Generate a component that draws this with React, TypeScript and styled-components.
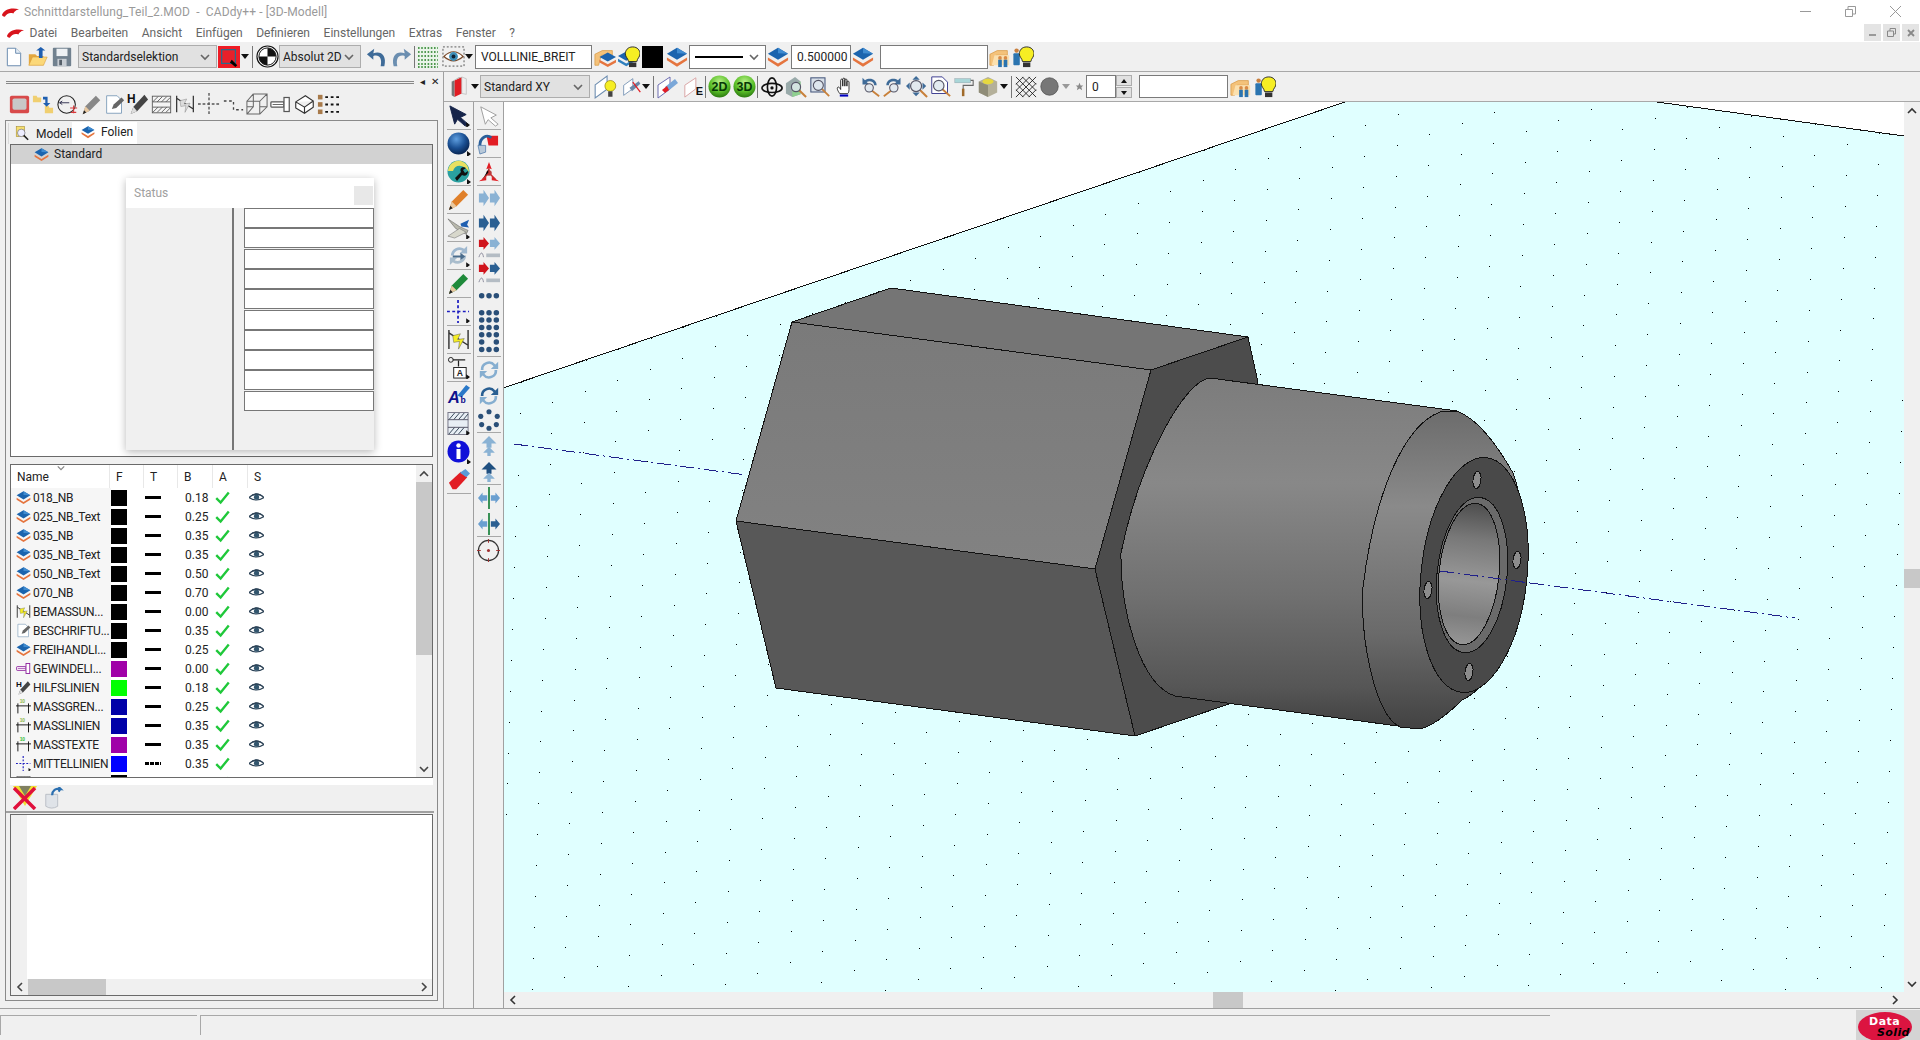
import React from "react";
import styled, { createGlobalStyle } from "styled-components";

const GlobalStyle = createGlobalStyle`
  html, body { margin: 0; padding: 0; background: #f0f0f0; }
  body { font-family: Roboto, "Open Sans", sans-serif; font-size: 12px; color: #222; }
  * { box-sizing: border-box; }
`;

/* ---------- icon primitives ---------- */

const Ico = styled.svg.attrs({ viewBox: "0 0 24 24" })<{ $w?: number; $ml?: number }>`
  width: ${(p) => p.$w ?? 22}px;
  height: ${(p) => p.$w ?? 22}px;
  margin-left: ${(p) => p.$ml ?? 0}px;
  flex-shrink: 0;
  display: block;
`;

type IconProps = { $w?: number; $ml?: number };

const Layers = (p: IconProps) => (
  <Ico {...p}>
    <polygon points="12,2 23,8.5 12,15 1,8.5" fill="#1b64ae" />
    <polygon points="12,2 23,8.5 12,8" fill="#3f8bd0" />
    <polygon points="1,12.5 12,19 23,12.5 23,15.5 12,22.5 1,15.5" fill="#e5753f" />
  </Ico>
);

const Swoosh = ({ $left }: { $left: number }) => (
  <LogoSvg $left={$left} viewBox="0 0 18 10">
    <path d="M0 8 C2 3 8 0 18 2 C14 3 13 5 12 6.500 C8 5 5 7 3 10 C1 10 0 9 0 8 Z" fill="#d8141c" />
  </LogoSvg>
);

const NewDoc = (p: IconProps) => (
  <Ico {...p}>
    <path d="M4 1.5 H14 L20 7.5 V22.5 H4 Z" fill="#fff" stroke="#6d8db0" strokeWidth="1.2" />
    <path d="M14 1.5 V7.5 H20" fill="#e6eef6" stroke="#6d8db0" strokeWidth="1.2" />
  </Ico>
);

const OpenFolder = (p: IconProps) => (
  <Ico {...p}>
    <path d="M2 9 H9 L11 11 H18 V21 H2 Z" fill="#e2a73f" />
    <path d="M2 21 L6 12 H22 L18 21 Z" fill="#fbd879" stroke="#d89b35" strokeWidth=".6" />
    <path d="M13 13 V5 H10 L15 1 L20 5 H17 V13 Z" fill="#1f5fb0" />
  </Ico>
);

const Floppy = (p: IconProps) => (
  <Ico {...p}>
    <rect x="2" y="2" width="20" height="20" rx="1" fill="#71818f" />
    <rect x="6" y="3" width="12" height="8" fill="#eef1f4" />
    <rect x="7" y="14" width="10" height="8" fill="#c8ced4" />
    <rect x="9" y="15" width="3" height="6" fill="#555f69" />
  </Ico>
);

const RedSelect = (p: IconProps) => (
  <Ico {...p}>
    <rect width="24" height="24" fill="#ee1c25" />
    <rect x="4" y="4" width="15" height="15" fill="#e8202a" stroke="#2b6a8a" strokeWidth="1.400" />
    <path d="M15 15 L21 21 L19 23 L13 18 Z" fill="#000" />
  </Ico>
);

const TargetBW = (p: IconProps) => (
  <Ico {...p}>
    <circle cx="12" cy="12" r="11" fill="#fff" stroke="#111" strokeWidth="1.2" />
    <path d="M12 3 A9 9 0 0 1 21 12 H12 Z M12 21 A9 9 0 0 1 3 12 H12 Z" fill="#111" />
    <circle cx="12" cy="12" r="9" fill="none" stroke="#111" />
  </Ico>
);

const CurvedArrow = ({ flip, ...p }: IconProps & { flip?: boolean }) => (
  <Ico {...p}>
    <g transform={flip ? "matrix(-1 0 0 1 24 0)" : undefined}>
      <path d="M20 22 C23 10 16 5 8 8 L9 3 L1 9 L8 15 L8 11 C14 9 18 13 16 22 Z" fill={flip ? "#6b8eb0" : "#3e6b98"} />
    </g>
  </Ico>
);

const DotGrid = (p: IconProps) => (
  <Ico {...p}>
    <rect x="1" y="1" width="22" height="22" fill="#eaf4ea" />
    <path d="M2 3 H22 M2 7 H22 M2 11 H22 M2 15 H22 M2 19 H22 M2 22 H22" stroke="#1e7a1e" strokeWidth="1.6" strokeDasharray="1.6 1.6" />
  </Ico>
);

const EyeBox = (p: IconProps) => (
  <Ico {...p}>
    <rect x="1" y="2" width="22" height="20" fill="none" stroke="#555" strokeDasharray="2 2" />
    <path d="M2 12 Q12 2 22 12 Q12 21 2 12 Z" fill="#fff" stroke="#7a4a2a" strokeWidth="1.2" />
    <circle cx="12" cy="12" r="4.6" fill="#3f8fb8" />
    <circle cx="12" cy="12" r="2" fill="#123" />
  </Ico>
);

const People = () => (
  <>
    <circle cx="12" cy="13" r="2" fill="#d98a45" />
    <rect x="10" y="15" width="4" height="8" fill="#2a74b0" />
    <circle cx="18" cy="13" r="2" fill="#d98a45" />
    <rect x="16" y="15" width="4" height="8" fill="#2a74b0" />
  </>
);

const FolderPeople = (p: IconProps) => (
  <Ico {...p}>
    <path d="M1 9 L9 5 H20 V10 H8 L5 21 H1 Z" fill="#f4c27a" stroke="#d99a45" strokeWidth=".8" />
    <path d="M3 21 L6 10 H22 V21 Z" fill="#fbe0ae" />
    <People />
  </Ico>
);

const LayerFolder = (p: IconProps) => (
  <Ico {...p}>
    <path d="M1 9 L9 5 H20 V10 H8 L5 21 H1 Z" fill="#f4c27a" stroke="#d99a45" strokeWidth=".8" />
    <polygon points="15,7 24,12 15,17 6,12" fill="#1b64ae" />
    <polygon points="6,15 15,20 24,15 24,18 15,23 6,18" fill="#e5753f" />
  </Ico>
);

const Bulb = ({ layer, ...p }: IconProps & { layer?: boolean }) => (
  <Ico {...p}>
    {layer ? (
      <>
        <polygon points="9,6 18,11 9,16 0,11" fill="#1b64ae" />
        <polygon points="0,14 9,19 18,14 18,17 9,22 0,17" fill="#2f7fbd" />
      </>
    ) : (
      <>
        <circle cx="5" cy="5" r="2.4" fill="#c9803f" />
        <rect x="1.5" y="8" width="7" height="13" rx="1" fill="#2a74b0" />
      </>
    )}
    <path d="M16 1 C10.5 1 8 5 8 8.500 C8 12 11 13.500 11.500 17 H20.500 C21 13.500 24 12 24 8.500 C24 5 21.500 1 16 1 Z" fill="#f6ee24" stroke="#222" strokeWidth="1" />
    <rect x="12" y="18" width="8" height="5" fill="#333" />
  </Ico>
);

const Box3 = (p: IconProps) => (
  <Ico {...p}>
    <polygon points="7,5 15,1 15,19 7,23" fill="#e21d24" />
    <polygon points="4,6 7,5 7,23 4,21" fill="#777" />
    <polygon points="4,6 12,1 15,1 7,5" fill="#b8b8b8" />
    <polygon points="15,1 20,3 20,20 15,19" fill="#eee" stroke="#aaa" strokeWidth=".6" />
  </Ico>
);

const PlaneBulb = (p: IconProps) => (
  <Ico {...p}>
    <polygon points="2,10 13,2 13,14 2,22" fill="#fff" stroke="#6d8db0" />
    <circle cx="16" cy="11" r="5" fill="#f6ee24" stroke="#9a8a10" strokeWidth=".7" />
    <rect x="14" y="16" width="4" height="5" fill="#444" />
  </Ico>
);

const PlaneTool = ({ red, ...p }: IconProps & { red?: boolean }) => (
  <Ico {...p}>
    <polygon points="2,10 14,2 14,14 2,23" fill="#fff" stroke={red ? "#d8a0a0" : "#6d6db0"} />
    {red ? (
      <text x="14" y="21" fontSize="12" fontWeight="700" fontFamily="Liberation Sans" fill="#111">E</text>
    ) : (
      <>
        <path d="M9 12 L19 4 L22 8 L12 16 Z" fill="#7aa7d8" />
        <path d="M6 15 L11 11 L13 15 L9 18 Z" fill="#e21d24" />
      </>
    )}
  </Ico>
);

const PlaneTools = (p: IconProps) => (
  <Ico {...p}>
    <polygon points="2,10 13,2 13,14 2,22" fill="#fff" stroke="#6d8db0" />
    <path d="M9 13 L20 5 L22 8 L12 17 Z" fill="#6b88a8" />
    <path d="M13 6 L22 18" stroke="#e21d24" strokeWidth="1.500" />
  </Ico>
);

const Ball2D = ({ label, ...p }: IconProps & { label: string }) => (
  <Ico {...p}>
    <defs>
      <radialGradient id="ballG" cx="50%" cy="30%" r="70%">
        <stop offset="0" stopColor="#b8f08a" />
        <stop offset=".6" stopColor="#5cc02a" />
        <stop offset="1" stopColor="#2b7a10" />
      </radialGradient>
    </defs>
    <circle cx="12" cy="12" r="11.500" fill="url(#ballG)" />
    <text x="12" y="17" textAnchor="middle" fontSize="13" fontWeight="700" fontFamily="Liberation Sans" fill="#063806">{label}</text>
  </Ico>
);

const Orbit = (p: IconProps) => (
  <Ico {...p}>
    <ellipse cx="12" cy="12" rx="5" ry="10" fill="none" stroke="#111" strokeWidth="1.800" />
    <ellipse cx="12" cy="13" rx="11" ry="5" fill="none" stroke="#111" strokeWidth="1.800" />
    <circle cx="12" cy="13" r="1.800" fill="#111" />
  </Ico>
);

const Magnifier = ({ x = 10, y = 10, r = 7 }: { x?: number; y?: number; r?: number }) => (
  <>
    <line x1={x + r * 0.7} y1={y + r * 0.7} x2="23" y2="23" stroke="#c8803a" strokeWidth="2.200" />
    <circle cx={x} cy={y} r={r} fill="#dfe8ee" fillOpacity=".85" stroke="#556" strokeWidth="1.300" />
  </>
);

const HouseZoom = (p: IconProps) => (
  <Ico {...p}>
    <polygon points="1,8 11,1 17,6 17,20 8,23 1,19" fill="#9aa" />
    <polygon points="8,10 17,6 17,20 8,23" fill="#8fd08f" />
    <Magnifier x={12} y={12} r={5} />
  </Ico>
);

const GlassBox = (p: IconProps) => (
  <Ico {...p}>
    <rect x="1" y="1" width="17" height="17" fill="#d7dfe8" stroke="#4b5b80" strokeWidth="1.300" />
    <Magnifier x={10} y={10} r={6} />
  </Ico>
);

const Hand = (p: IconProps) => (
  <Ico {...p}>
    <path d="M7 20 C4 16 3 13 5 12 C6 12 7 13 8 15 V4 C8 2 10.500 2 10.500 4 V11 V2.500 C10.500 1 13 1 13 2.500 V11 V3.500 C13 2 15.500 2 15.500 3.500 V11 V6 C15.500 4.500 18 4.500 18 6 V15 C18 18 17 20 16 20 Z" fill="#fff" stroke="#111" />
    <rect x="7" y="21" width="10" height="2.500" fill="#0000c0" />
  </Ico>
);

const ZoomArrow = ({ fwd, ...p }: IconProps & { fwd?: boolean }) => (
  <Ico {...p}>
    <path d={fwd ? "M4 10 C4 3 12 0 18 4 L21 1 V9 H13 L16 6 C12 4 7 6 7 10 Z" : "M20 10 C20 3 12 0 6 4 L3 1 V9 H11 L8 6 C12 4 17 6 17 10 Z"} fill="#3e6b98" />
    <g transform={fwd ? "matrix(-1 0 0 1 24 0)" : undefined}>
      <Magnifier x={11} y={13} r={5} />
    </g>
  </Ico>
);

const PanZoom = (p: IconProps) => (
  <Ico {...p}>
    <polygon points="11,0 15,4 7,4" fill="#3e6b98" />
    <polygon points="11,22 15,18 7,18" fill="#3e6b98" />
    <polygon points="0,11 4,7 4,15" fill="#3e6b98" />
    <polygon points="22,11 18,7 18,15" fill="#3e6b98" />
    <Magnifier x={11} y={11} r={6} />
  </Ico>
);

const DocZoom = (p: IconProps) => (
  <Ico {...p}>
    <path d="M2 1 H14 L20 7 V20 H2 Z" fill="#fff" stroke="#3c3c90" strokeWidth="1.100" />
    <Magnifier x={10} y={11} r={6} />
  </Ico>
);

const Roller = (p: IconProps) => (
  <Ico {...p}>
    <rect x="1" y="2" width="19" height="5" fill="#a9d6d8" stroke="#8899a0" strokeWidth=".5" />
    <path d="M20 4 H23 V10 H11 V15" fill="none" stroke="#666" strokeWidth="1.300" />
    <rect x="9.500" y="14" width="3" height="9" fill="#a06a2a" />
  </Ico>
);

const ShadedCube = (p: IconProps) => (
  <Ico {...p}>
    <polygon points="2,6 12,1 22,6 22,18 12,23 2,18" fill="#b4b09a" />
    <polygon points="2,6 12,10 12,23 2,18" fill="#8f8c78" />
    <ellipse cx="12" cy="6" rx="6" ry="3" fill="#e6d840" />
  </Ico>
);

const Hatch = (p: IconProps) => (
  <Ico {...p}>
    <path d="M1 1 L23 23 M8 1 L23 16 M15 1 L23 9 M1 8 L16 23 M1 15 L9 23 M23 1 L1 23 M16 1 L1 16 M9 1 L1 9 M23 8 L8 23 M23 15 L15 23" stroke="#111" strokeWidth=".9" />
  </Ico>
);

const GreyBall = (p: IconProps) => (
  <Ico {...p}>
    <circle cx="12" cy="12" r="11" fill="#777" stroke="#555" />
  </Ico>
);

const Star = (p: IconProps) => (
  <Ico {...p}>
    <polygon points="12,2 15,9 22,9 17,14 19,22 12,17 5,22 7,14 2,9 9,9" fill="#888" />
  </Ico>
);

/* left dock icon row */
const ActiveToggle = (p: IconProps) => (
  <Ico {...p}>
    <rect x="1" y="2" width="22" height="20" rx="2" fill="#d84a4a" />
    <rect x="4" y="5" width="16" height="13" rx="2" fill="#c8c8c8" />
  </Ico>
);

const FolderSwap = (p: IconProps) => (
  <Ico {...p}>
    <path d="M1 3 H5 L6 5 H10 V10 H1 Z" fill="#f0cf70" />
    <path d="M14 14 H18 L19 16 H23 V22 H14 Z" fill="#f0cf70" />
    <path d="M12 4 H17 V11 H20 L16 15 L12 11 H14.500 V7 H12 Z" fill="#1f5fb0" />
  </Ico>
);

const CircleDim = (p: IconProps) => (
  <Ico {...p}>
    <circle cx="11" cy="12" r="10" fill="none" stroke="#222" strokeWidth="1.200" />
    <path d="M3 10 H14 M3 10 L6 8 M3 10 L6 12" fill="none" stroke="#224" />
    <path d="M15 16 H23 M19 13 V22 M16 21 H22" stroke="#d8383a" strokeWidth="1.200" />
  </Ico>
);

const Pencil = ({ color = "#888", tip = "#e8c8a0", ...p }: IconProps & { color?: string; tip?: string }) => (
  <Ico {...p}>
    <path d="M2 23 L5 14 L17 2 L22 7 L10 19 Z" fill={color} />
    <path d="M2 23 L5 14 L10 19 Z" fill={tip} />
    <path d="M2 23 L3.500 18.500 L6 21 Z" fill="#222" />
  </Ico>
);

const NotePencil = (p: IconProps) => (
  <Ico {...p}>
    <path d="M3 2 H15 L20 7 V22 H3 Z" fill="#fff" stroke="#7a9ab8" />
    <path d="M9 17 L11 12 L20 4 L23 7 L14 16 Z" fill="#666" />
  </Ico>
);

const HPencil = (p: IconProps) => (
  <Ico {...p}>
    <text x="0" y="11" fontSize="13" fontWeight="700" fontFamily="Liberation Sans" fill="#111">H</text>
    <path d="M4 23 L7 15 L19 2 L23 7 L11 20 Z" fill="#444" />
    <path d="M4 23 L7 15 L11 20 Z" fill="#ddd" />
  </Ico>
);

const HatchBox = (p: IconProps) => (
  <Ico {...p}>
    <rect x="1.500" y="2.500" width="21" height="19" fill="#f4f4f4" stroke="#555" />
    <path d="M2 9 L8 3 M7 9 L13 3 M12 9 L18 3 M17 9 L22 4 M2 21 L8 15 M7 21 L13 15 M12 21 L18 15 M17 21 L22 16" stroke="#555" />
    <path d="M2 9 H22 M2 15 H22" stroke="#555" />
  </Ico>
);

const DimBolt = ({ fill, ...p }: IconProps & { fill?: string }) => (
  <Ico {...p}>
    <path d="M2 2 V22 M22 2 V22 M2 5 L22 18" stroke="#333" strokeWidth="1.500" fill="none" />
    <path d="M6 8 L14 6 L11 12 L18 11 L12 22 L13 14 L7 15 Z" fill={fill ?? "#dcdcdc"} stroke={fill ? "#555" : "#777"} strokeWidth=".5" />
  </Ico>
);

const CenterMark = (p: IconProps) => (
  <Ico {...p}>
    <path d="M0 12 H24 M12 0 V24" stroke="#555" strokeWidth="1.500" strokeDasharray="3 2" />
  </Ico>
);

const StepDash = (p: IconProps) => (
  <Ico {...p}>
    <path d="M1 8 H12 V18 H23" fill="none" stroke="#444" strokeWidth="1.500" strokeDasharray="3 3" />
  </Ico>
);

const WireCube = (p: IconProps) => (
  <Ico {...p}>
    <path d="M1 9 H15 V23 H1 Z M8 1 H23 V15 H15 M1 9 L8 1 M15 9 L23 1 M8 1 V15 H1 M15 23 L23 15 M8 15 L1 23" fill="none" stroke="#666" strokeWidth="1.100" />
  </Ico>
);

const Thread = ({ color = "#555", ...p }: IconProps & { color?: string }) => (
  <Ico {...p}>
    <rect x="1" y="9" width="15" height="6" rx="1" fill="#fff" stroke={color} strokeWidth="1.400" />
    <rect x="16" y="4" width="6" height="16" fill="#fff" stroke={color} strokeWidth="1.400" />
    <path d="M3 12 H15" stroke={color} />
  </Ico>
);

const WireBox = (p: IconProps) => (
  <Ico {...p}>
    <path d="M2 9 L13 2 L22 8 V15 L12 22 L2 16 Z M2 9 L12 15 L22 8 M12 15 V22" fill="#fff" stroke="#333" strokeWidth="1.300" />
  </Ico>
);

const ListIcon = (p: IconProps) => (
  <Ico {...p}>
    <rect x="1" y="2" width="5" height="5" fill="#a87a4a" />
    <rect x="1" y="10" width="5" height="5" fill="#a87a4a" />
    <rect x="1" y="18" width="5" height="5" fill="#a87a4a" />
    <path d="M9 4.500 H24 M9 12.500 H24 M9 20.500 H24" stroke="#111" strokeWidth="2" strokeDasharray="3 3" />
  </Ico>
);

/* vertical rail icons */
const Flyout = () => <polygon points="20,19 24,22 20,25" fill="#111" />;

const ArrowTool = ({ ghost, ...p }: IconProps & { ghost?: boolean }) => (
  <Ico {...p}>
    <path d="M3 2 L20 11 L14 14 L22 21 L19 23 L11 16 L8 21 Z" fill={ghost ? "#fff" : "#16244a"} stroke={ghost ? "#999" : "#16244a"} />
    {!ghost && <Flyout />}
  </Ico>
);

const Sphere = (p: IconProps) => (
  <Ico {...p}>
    <defs>
      <radialGradient id="sphereG" cx="40%" cy="30%" r="75%">
        <stop offset="0" stopColor="#5f9fe0" />
        <stop offset=".55" stopColor="#1a4f92" />
        <stop offset="1" stopColor="#07204a" />
      </radialGradient>
    </defs>
    <circle cx="11.500" cy="11.500" r="11" fill="url(#sphereG)" />
    <Flyout />
  </Ico>
);

const GlobeWrench = (p: IconProps) => (
  <Ico {...p}>
    <circle cx="11.500" cy="11.500" r="11" fill="#2aa0a0" />
    <path d="M1 11 A11 11 0 0 1 14 1 C20 3 22 8 22 12 C17 4 8 4 6 11 Z" fill="#e8e060" />
    <path d="M8 18 L14 12 C12 8 16 6 19 8 L16 10 L18 13 L21 11 C21 15 18 17 15 15 L10 21 Z" fill="#111" />
    <Flyout />
  </Ico>
);

const Pliers = (p: IconProps) => (
  <Ico {...p}>
    <path d="M1 3 L13 11 L22 15 L20 19 L9 13 Z" fill="#b8b8ac" stroke="#666" strokeWidth=".6" />
    <path d="M1 21 L13 13 L20 17 L8 23 Z" fill="#d8d8cc" stroke="#777" strokeWidth=".6" />
    <path d="M14 8 L23 4 L21 9 L23 12 L15 11 Z" fill="#1f5fb0" />
    <Flyout />
  </Ico>
);

const Rotor = (p: IconProps) => (
  <Ico {...p}>
    <path d="M4 12 A9 9 0 0 1 18 5 L21 2 V10 H13 L16 7 A6 6 0 0 0 7 12 Z" fill="#9fb8cf" />
    <path d="M20 12 A9 9 0 0 1 6 19 L3 22 V14 H11 L8 17 A6 6 0 0 0 17 12 Z" fill="#a8bccc" />
    <path d="M6 12 H14 V9 L19 13 L14 17 V14 H6 Z" fill="#4a6c8c" />
    <Flyout />
  </Ico>
);

const CenterTool = (p: IconProps) => (
  <Ico {...p}>
    <path d="M0 12 H23 M11.500 0 V24" stroke="#1c1cc0" strokeWidth="1.800" strokeDasharray="3 2.500" />
    <Flyout />
  </Ico>
);

const AnnotTool = (p: IconProps) => (
  <Ico {...p}>
    <circle cx="4" cy="4" r="2.500" fill="none" stroke="#222" />
    <path d="M6 4 H19 M12 5 V11" stroke="#222" strokeWidth="1.300" />
    <rect x="7" y="12" width="13" height="11" fill="#fff" stroke="#222" />
    <text x="13.500" y="21" textAnchor="middle" fontSize="9" fontWeight="700" fontFamily="Liberation Sans" fill="#222">A</text>
    <Flyout />
  </Ico>
);

const TextTool = (p: IconProps) => (
  <Ico {...p}>
    <path d="M11 12 L20 1 L24 4 L15 14 Z" fill="#2a78c8" />
    <text x="1" y="20" fontSize="17" fontWeight="700" fontStyle="italic" fontFamily="Liberation Sans" fill="#10108c">A</text>
    <text x="14" y="20" fontSize="9" fontWeight="700" fontFamily="Liberation Sans" fill="#10108c">b</text>
  </Ico>
);

const HatchTool = (p: IconProps) => (
  <Ico {...p}>
    <rect x="1" y="0.500" width="21" height="23" fill="#e8eef4" stroke="#778" />
    <path d="M2 8 L8 1 M7 8 L13 1 M12 8 L18 1 M17 8 L22 2 M2 23 L8 16 M7 23 L13 16 M12 23 L18 16" stroke="#345" />
    <path d="M1 8 H22 M1 16 H22" stroke="#556" />
    <Flyout />
  </Ico>
);

const Info = (p: IconProps) => (
  <Ico {...p}>
    <circle cx="11.500" cy="11.500" r="11" fill="#1010d8" />
    <circle cx="11.500" cy="5.500" r="2.200" fill="#fff" />
    <rect x="9.500" y="9" width="4" height="10" fill="#fff" />
    <Flyout />
  </Ico>
);

const Eraser = (p: IconProps) => (
  <Ico {...p}>
    <path d="M1 15 L14 3 L21 9 L9 22 L5 22 Z" fill="#e21d24" />
    <path d="M13 4 L19 0 L24 5 L20 9 Z" fill="#5a9ad8" />
  </Ico>
);

const MoveRed = (p: IconProps) => (
  <Ico {...p}>
    <path d="M10 4 L22 4 L22 14 L12 14 Z" fill="#e21d24" />
    <path d="M3 14 C3 6 10 2 15 6" fill="none" stroke="#2a5f9a" strokeWidth="3" />
    <path d="M1 14 L9 14 L9 21 L3 23 Z" fill="#b8c8d8" stroke="#2a5f9a" strokeWidth=".6" />
  </Ico>
);

const Triad = (p: IconProps) => (
  <Ico {...p}>
    <path d="M12 1 L15 9 L12 8 L9 9 Z M1 22 L9 17 L9 21 Z M23 22 L15 17 L15 21 Z" fill="#e21d24" />
    <circle cx="12" cy="13" r="3" fill="#b84040" />
    <path d="M12 8 V13 L5 20 M12 13 L19 20" stroke="#c83030" strokeWidth="1.600" />
  </Ico>
);

const DoubleArrow = ({ a, b, ...p }: IconProps & { a: string; b: string }) => (
  <Ico {...p}>
    <polygon points="1,7 6,7 6,3 12,12 6,21 6,17 1,17" fill={a} />
    <polygon points="13,7 18,7 18,3 24,12 18,21 18,17 13,17" fill={b} />
  </Ico>
);

const ArrowWave = ({ b, ...p }: IconProps & { b: string }) => (
  <Ico {...p}>
    <polygon points="1,3 6,3 6,0 12,7 6,14 6,11 1,11" fill="#d0141c" />
    <polygon points="13,3 18,3 18,0 24,7 18,14 18,11 13,11" fill={b} />
    <path d="M1 22 C3 16 5 16 6 22" fill="none" stroke="#889" />
    <path d="M9 18 H24 V22 H9 Z" fill="#b4bcc4" />
  </Ico>
);

const DotsGrid = ({ rows, gapAt }: { rows: number; gapAt?: number }) => (
  <DotsSvg viewBox={`0 0 24 ${rows * 8}`} $h={rows * 7.7}>
    {Array.from({ length: rows * 3 }).map((_, i) =>
      i === gapAt ? null : <circle key={i} cx={4 + (i % 3) * 8} cy={4 + Math.floor(i / 3) * 8} r="3" fill="#2a4f78" />
    )}
  </DotsSvg>
);

const RotateDouble = ({ dark, ...p }: IconProps & { dark?: boolean }) => (
  <Ico {...p}>
    <path d="M3 12 A9 9 0 0 1 19 6 L22 3 V11 H14 L17 8 A6 6 0 0 0 6 12 Z" fill={dark ? "#2a5f92" : "#86aed0"} />
    <path d="M21 12 A9 9 0 0 1 5 18 L2 21 V13 H10 L7 16 A6 6 0 0 0 18 12 Z" fill="#86aed0" />
  </Ico>
);

const DotRing = (p: IconProps) => (
  <Ico {...p}>
    {[[12, 3], [21, 8], [20, 17], [12, 21], [4, 17], [3, 8]].map(([x, y]) => (
      <circle key={x + "-" + y} cx={x} cy={y} r="2.800" fill="#2a4f78" />
    ))}
  </Ico>
);

const UpArrows = ({ dark, ...p }: IconProps & { dark?: boolean }) => (
  <Ico {...p}>
    <polygon points="12,0 21,9 15,9 15,14 9,14 9,9 3,9" fill={dark ? "#1f4f80" : "#8ab2d4"} />
    <polygon points="12,13 19,20 14,20 14,24 10,24 10,20 5,20" fill="#8ab2d4" />
  </Ico>
);

const Mirror = ({ b, ...p }: IconProps & { b: string }) => (
  <Ico {...p}>
    <rect x="11" y="0" width="2" height="24" fill="#2a8a4a" />
    <polygon points="0,12 5,6 5,9 10,9 10,15 5,15 5,18" fill="#6a9fd0" />
    <polygon points="24,12 19,6 19,9 14,9 14,15 19,15 19,18" fill={b} />
  </Ico>
);

const SnapCircle = (p: IconProps) => (
  <Ico {...p}>
    <circle cx="12" cy="12" r="10.500" fill="none" stroke="#333" strokeWidth="1.300" />
    <path d="M12 0 V4 M12 20 V24 M0 12 H4 M20 12 H24" stroke="#a03030" />
    <circle cx="12" cy="12" r="1.600" fill="#a03030" />
  </Ico>
);

/* list row icons */
const Check = (p: IconProps) => (
  <Ico {...p}>
    <path d="M2 13 L9 20 L22 4" fill="none" stroke="#1fc83a" strokeWidth="3.800" />
  </Ico>
);

const EyeSmall = (p: IconProps) => (
  <Ico {...p}>
    <path d="M0 12 Q12 1 24 12 Q12 20 0 12 Z" fill="#fff" stroke="#2c4256" strokeWidth="1.800" />
    <path d="M0 11 Q12 -1 24 11 Q12 5 0 11 Z" fill="#2c4256" />
    <circle cx="12" cy="11.500" r="4.200" fill="#33566e" />
  </Ico>
);

const DimSmall = ({ color = "#8fb84a", ...p }: IconProps & { color?: string }) => (
  <Ico {...p}>
    <path d="M3 7 V23 M20 7 V23 M0 11 H24" stroke="#111" strokeWidth="1.500" />
    <text x="6" y="7" fontSize="8" fontWeight="700" fontFamily="Liberation Sans" fill={color}>10</text>
  </Ico>
);

const ExLayer = (p: IconProps) => (
  <Ico {...p}>
    <polygon points="0,0 24,0 12,20" fill="#f0e030" />
    <polygon points="6,0 18,0 12,10" fill="#808060" />
    <path d="M1 2 L22 23 M22 2 L1 23" stroke="#e0103c" strokeWidth="3.500" />
  </Ico>
);

const CanUndo = (p: IconProps) => (
  <Ico {...p}>
    <path d="M3 8 H16 V21 Q9.500 25 3 21 Z" fill="#dfe3e8" stroke="#b8bcc4" />
    <path d="M10 9 C10 4 14 1 19 2 L17 0 M19 2 L17 5" fill="none" stroke="#2a6fb0" strokeWidth="2.400" />
  </Ico>
);

const TabMagnifier = (p: IconProps) => (
  <Ico {...p}>
    <rect x="2" y="1" width="13" height="16" fill="#f6e070" stroke="#a89030" />
    <circle cx="10" cy="11" r="6" fill="#eef" stroke="#667" />
    <line x1="14" y1="15" x2="21" y2="22" stroke="#222" strokeWidth="2.500" />
  </Ico>
);

const Chevron = ({ dir, color = "#444", size = 10 }: { dir: "up" | "down" | "left" | "right"; color?: string; size?: number }) => {
  const d = { up: "M1 7 L5 3 L9 7", down: "M1 3 L5 7 L9 3", left: "M7 1 L3 5 L7 9", right: "M3 1 L7 5 L3 9" }[dir];
  return (
    <ChevronSvg viewBox="0 0 10 10" $size={size}>
      <path d={d} fill="none" stroke={color} strokeWidth="1.600" />
    </ChevronSvg>
  );
};

/* ---------- layout ---------- */

const Page = styled.div`
  width: 1920px;
  height: 1040px;
  display: flex;
  flex-direction: column;
  overflow: hidden;
  background: #f0f0f0;
`;

const TitleBar = styled.div`
  height: 22px;
  background: #fff;
  display: flex;
  align-items: center;
  color: #9a9a9a;
  font-size: 12px;
  padding: 1px 0 0 2px;
  position: relative;
`;

const LogoSvg = styled.svg<{ $left: number }>`
  width: 17px;
  height: 10px;
  margin-left: ${(p) => p.$left}px;
  margin-right: 5px;
  flex-shrink: 0;
`;

const TitleText = styled.span`
  white-space: pre;
  letter-spacing: 0.1px;
`;

const WindowButtons = styled.div`
  margin-left: auto;
  display: flex;
  align-items: center;
  gap: 34px;
  padding-right: 19px;
`;

const MenuRow = styled.div`
  height: 20px;
  background: #fff;
  display: flex;
  align-items: center;
  color: #666;
  padding: 1px 0 0 7px;
  gap: 13.6px;
`;

const MenuItem = styled.span`
  white-space: nowrap;
  &:first-of-type {
    margin-left: -13px;
  }
`;

const MdiButtons = styled.div`
  margin-left: auto;
  display: flex;
  gap: 2px;
  padding-right: 1px;
`;

const MdiButton = styled.div`
  width: 17px;
  height: 17px;
  background: #e4e4e4;
  display: flex;
  align-items: center;
  justify-content: center;
`;

const Toolbar = styled.div<{ $h: number; $pad: number }>`
  height: ${(p) => p.$h}px;
  padding-left: ${(p) => p.$pad}px;
  display: flex;
  align-items: center;
  background: #f0f0f0;
  border-bottom: 1px solid #a8a8a8;
  flex-shrink: 0;
`;

const Sep = styled.div<{ $ml: number; $mr?: number }>`
  width: 1px;
  height: 22px;
  background: #777;
  margin-left: ${(p) => p.$ml}px;
  margin-right: ${(p) => p.$mr ?? 0}px;
  flex-shrink: 0;
`;

const Caret = styled.div<{ $ml: number; $grey?: boolean }>`
  width: 0;
  height: 0;
  border-left: 4px solid transparent;
  border-right: 4px solid transparent;
  border-top: 5px solid ${(p) => (p.$grey ? "#999" : "#111")};
  margin-left: ${(p) => p.$ml}px;
  flex-shrink: 0;
`;

const Select = styled.div<{ $w: number; $ml: number; $white?: boolean; $h?: number }>`
  width: ${(p) => p.$w}px;
  height: ${(p) => p.$h ?? 23}px;
  margin-left: ${(p) => p.$ml}px;
  background: ${(p) => (p.$white ? "#fff" : "#e1e1e1")};
  border: 1px solid ${(p) => (p.$white ? "#7a7a7a" : "#adadad")};
  display: flex;
  align-items: center;
  justify-content: space-between;
  padding: 0 6px 0 3px;
  color: #222;
  flex-shrink: 0;
  white-space: nowrap;
`;

const LinePreview = styled.div`
  width: 48px;
  height: 2px;
  background: #000;
  margin-left: 2px;
`;

const Field = styled.div<{ $w: number; $ml: number; $h?: number; $pad?: number }>`
  width: ${(p) => p.$w}px;
  height: ${(p) => p.$h ?? 24}px;
  margin-left: ${(p) => p.$ml}px;
  background: #fff;
  border: 1px solid #7a7a7a;
  display: flex;
  align-items: center;
  padding-left: ${(p) => p.$pad ?? 5}px;
  color: #222;
  flex-shrink: 0;
`;

const Swatch = styled.div<{ $ml: number }>`
  width: 21px;
  height: 22px;
  margin-left: ${(p) => p.$ml}px;
  background: #000;
  flex-shrink: 0;
`;

const Spin = styled.div`
  width: 16px;
  height: 23px;
  display: flex;
  flex-direction: column;
  justify-content: space-between;
  flex-shrink: 0;
`;

const SpinBtn = styled.div<{ $down?: boolean }>`
  height: 11px;
  background: #e1e1e1;
  border: 1px solid #adadad;
  display: flex;
  align-items: center;
  justify-content: center;
  &::after {
    content: "";
    border-left: 3px solid transparent;
    border-right: 3px solid transparent;
    ${(p) => (p.$down ? "border-top: 4px solid #111;" : "border-bottom: 4px solid #111;")}
  }
`;

const Main = styled.div`
  flex: 1;
  display: flex;
  min-height: 0;
`;

const Dock = styled.div`
  width: 444px;
  border-right: 1px solid #a0a0a0;
  display: flex;
  flex-direction: column;
  background: #f0f0f0;
  flex-shrink: 0;
`;

const DockHeader = styled.div`
  height: 20px;
  display: flex;
  align-items: center;
  padding-left: 6px;
  color: #222;
`;

const Grip = styled.div`
  width: 408px;
  height: 3px;
  border-top: 1px solid #888;
  border-bottom: 1px solid #888;
`;

const DockHeaderGlyph = styled.span<{ $ml: number }>`
  margin-left: ${(p) => p.$ml}px;
  font-size: 10px;
  font-weight: 700;
  line-height: 1;
  font-family: "Liberation Sans", "DejaVu Sans", sans-serif;
`;

const DockIcons = styled.div`
  height: 24px;
  display: flex;
  align-items: center;
  padding-left: 9px;
  margin-bottom: 4px;
`;

const Panel = styled.div`
  margin-left: 5px;
  width: 433px;
  height: 881px;
  border: 1px solid #8a8a8a;
  padding: 0 0 0 4px;
  display: flex;
  flex-direction: column;
`;

const Tabs = styled.div`
  height: 23px;
  display: flex;
  margin-left: -2px;
  align-items: flex-end;
`;

const Tab = styled.div<{ $active?: boolean }>`
  width: ${(p) => (p.$active ? 65 : 64)}px;
  height: ${(p) => (p.$active ? 22 : 21)}px;
  background: ${(p) => (p.$active ? "#fff" : "#f0f0f0")};
  border-left: ${(p) => (p.$active ? "none" : "1px solid #d8d8d8")};
  display: flex;
  align-items: center;
  gap: 6px;
  padding-left: ${(p) => (p.$active ? 9 : 6)}px;
  padding-bottom: ${(p) => (p.$active ? 3 : 0)}px;
  color: #222;
  white-space: nowrap;
`;

const TreeBox = styled.div`
  width: 423px;
  height: 313px;
  border: 1px solid #6a6a6a;
  background: #fff;
  position: relative;
  flex-shrink: 0;
`;

const TreeRow = styled.div`
  height: 19px;
  background: #d2d2d2;
  display: flex;
  align-items: center;
  gap: 5px;
  padding: 0 0 1px 23px;
  color: #222;
`;

const StatusWindow = styled.div`
  position: absolute;
  left: 115px;
  top: 33px;
  width: 248px;
  height: 272px;
  background: #f0f0f0;
  box-shadow: 0 2px 8px rgba(0, 0, 0, 0.28);
  display: flex;
  flex-direction: column;
`;

const StatusHead = styled.div`
  height: 30px;
  background: #fff;
  color: #a0a0a0;
  display: flex;
  align-items: center;
  justify-content: space-between;
  padding: 0 1px 0 8px;
`;

const StatusClose = styled.div`
  width: 19px;
  height: 19px;
  background: #e8e8e8;
  margin-top: 4px;
`;

const StatusBody = styled.div`
  flex: 1;
  display: flex;
`;

const StatusLeft = styled.div`
  width: 108px;
  border-right: 2px solid #777;
`;

const StatusFields = styled.div`
  margin-left: 10px;
  width: 130px;
  display: flex;
  flex-direction: column;
`;

const StatusField = styled.div<{ $gap: number }>`
  height: 20px;
  margin-top: ${(p) => p.$gap}px;
  background: #fff;
  border: 1px solid #777;
  flex-shrink: 0;
`;

const ListBox = styled.div`
  margin-top: 7px;
  width: 423px;
  height: 314px;
  border: 1px solid #6a6a6a;
  background: #fff;
  display: flex;
  flex-shrink: 0;
  overflow: hidden;
`;

const ListMain = styled.div`
  flex: 1;
  min-width: 0;
  overflow: hidden;
`;

const ListHead = styled.div`
  height: 23px;
  display: grid;
  grid-template-columns: 99px 34px 34px 35px 35px 35px;
  position: relative;
`;

const HeadCell = styled.div`
  display: flex;
  align-items: center;
  padding-left: 6px;
  border-right: 1px solid #e8e8e8;
  color: #222;
  &:nth-child(6) {
    border-right: none;
  }
`;

const SortMark = styled.div`
  position: absolute;
  left: 46px;
  top: -1px;
`;

const Row = styled.div`
  height: 19px;
  display: grid;
  grid-template-columns: 100px 33px 34px 35px 35px 35px;
  align-items: center;
  color: #222;
`;

const NameCell = styled.div`
  height: 19px;
  background: #f6f6f6;
  display: flex;
  align-items: center;
  gap: 2px;
  padding-left: 5px;
  white-space: nowrap;
  letter-spacing: -0.25px;
`;

const ColorCell = styled.div<{ $color: string }>`
  width: 16px;
  height: 16px;
  background: ${(p) => p.$color};
`;

const DashCell = styled.div<{ $dotted?: boolean }>`
  width: 16px;
  height: 3px;
  margin-left: 1px;
  background: ${(p) => (p.$dotted ? "repeating-linear-gradient(90deg, #000 0 4px, #fff 4px 5px)" : "#000")};
`;

const WidthCell = styled.div`
  padding-left: 7px;
`;

const IconCell = styled.div<{ $pad: number }>`
  padding-left: ${(p) => p.$pad}px;
`;

const VTrack = styled.div<{ $w?: number }>`
  width: ${(p) => p.$w ?? 16}px;
  background: #f0f0f0;
  display: flex;
  flex-direction: column;
  align-items: center;
  flex-shrink: 0;
  position: relative;
`;

const ScrollEnd = styled.div<{ $bottom?: boolean }>`
  height: 17px;
  width: 100%;
  display: flex;
  align-items: center;
  justify-content: center;
  flex-shrink: 0;
  margin-top: ${(p) => (p.$bottom ? "auto" : 0)};
`;

const ThumbV = styled.div<{ $h: number; $top?: number }>`
  width: 100%;
  height: ${(p) => p.$h}px;
  margin-top: ${(p) => p.$top ?? 0}px;
  background: #c8c8c8;
  flex-shrink: 0;
`;

const WhiteStrip = styled.div`
  height: 7px;
  width: 423px;
  background: #fff;
  flex-shrink: 0;
`;

const ListTools = styled.div`
  height: 28px;
  width: 428px;
  margin-left: -4px;
  padding-left: 7px;
  border-bottom: 2px solid #a0a0a0;
  display: flex;
  align-items: center;
  gap: 6px;
  flex-shrink: 0;
`;

const NoteBox = styled.div`
  margin-top: 1px;
  width: 423px;
  height: 182px;
  border: 1px solid #6a6a6a;
  background: #fff;
  display: flex;
  flex-direction: column;
  flex-shrink: 0;
`;

const NoteArea = styled.div`
  flex: 1;
  display: flex;
`;

const NoteGutter = styled.div`
  width: 16px;
  background: #f0f0f0;
`;

const HScroll = styled.div<{ $h: number }>`
  height: ${(p) => p.$h}px;
  background: #f0f0f0;
  display: flex;
  align-items: center;
  justify-content: space-between;
  flex-shrink: 0;
`;

const ScrollBtn = styled.div`
  width: 17px;
  height: 100%;
  display: flex;
  align-items: center;
  justify-content: center;
  flex-shrink: 0;
`;

const ThumbH = styled.div<{ $w: number; $ml: number }>`
  width: ${(p) => p.$w}px;
  height: 100%;
  margin-left: ${(p) => p.$ml}px;
  margin-right: auto;
  background: #c8c8c8;
`;

const Work = styled.div`
  flex: 1;
  min-width: 0;
  display: flex;
  flex-direction: column;
`;

const WorkBody = styled.div`
  flex: 1;
  display: flex;
  min-height: 0;
`;

const Rail = styled.div`
  width: 30px;
  border-right: 1px solid #a0a0a0;
  display: flex;
  flex-direction: column;
  align-items: center;
  flex-shrink: 0;
  background: #f0f0f0;
`;

const RailSlot = styled.div<{ $h: number; $sep?: boolean }>`
  height: ${(p) => p.$h}px;
  width: 24px;
  display: flex;
  align-items: center;
  justify-content: center;
  border-bottom: 1px solid ${(p) => (p.$sep ? "#a8a8a8" : "transparent")};
  flex-shrink: 0;
`;

const DotsSvg = styled.svg<{ $h: number }>`
  width: 22px;
  height: ${(p) => p.$h}px;
  flex-shrink: 0;
`;

const ChevronSvg = styled.svg<{ $size: number }>`
  width: ${(p) => p.$size}px;
  height: ${(p) => p.$size}px;
  display: block;
`;

const CanvasColumn = styled.div`
  flex: 1;
  min-width: 0;
  display: flex;
  flex-direction: column;
`;

const CanvasRow = styled.div`
  flex: 1;
  display: flex;
  min-height: 0;
`;

const Canvas = styled.svg`
  flex: 1;
  min-width: 0;
  height: 100%;
  display: block;
  background: #fff;
  shape-rendering: crispEdges;
`;

const StatusBar = styled.div`
  height: 32px;
  border-top: 1px solid #a0a0a0;
  display: flex;
  align-items: flex-start;
  padding-top: 6px;
  position: relative;
  flex-shrink: 0;
`;

const StatusPane = styled.div<{ $w: number }>`
  width: ${(p) => p.$w}px;
  height: 20px;
  border-top: 1px solid #a8a8a8;
  border-left: 1px solid #a8a8a8;
  margin-right: 3px;
`;

const Brand = styled.div`
  position: absolute;
  right: 0;
  top: 1px;
  width: 64px;
  height: 30px;
  background: #d4d4d4;
  overflow: hidden;
`;

const BrandOval = styled.div`
  position: absolute;
  left: 2px;
  top: 2px;
  width: 54px;
  height: 30px;
  border-radius: 50%;
  background: #dc1440;
`;

const BrandData = styled.span`
  position: absolute;
  left: 13px;
  top: 6px;
  color: #fff;
  font: 700 11px "DejaVu Sans", sans-serif;
  letter-spacing: 0.5px;
  line-height: 11px;
`;

const BrandSolid = styled.span`
  position: absolute;
  left: 21px;
  top: 17px;
  color: #000;
  font: italic 700 11px "DejaVu Sans", sans-serif;
  letter-spacing: 0.4px;
  line-height: 11px;
`;

/* ---------- data ---------- */

type RowData = { name: string; icon: React.ReactNode; color: string; width: string; dotted?: boolean };

const S = 15;
const rows: RowData[] = [
  { name: "018_NB", icon: <Layers $w={S} />, color: "#000", width: "0.18" },
  { name: "025_NB_Text", icon: <Layers $w={S} />, color: "#000", width: "0.25" },
  { name: "035_NB", icon: <Layers $w={S} />, color: "#000", width: "0.35" },
  { name: "035_NB_Text", icon: <Layers $w={S} />, color: "#000", width: "0.35" },
  { name: "050_NB_Text", icon: <Layers $w={S} />, color: "#000", width: "0.50" },
  { name: "070_NB", icon: <Layers $w={S} />, color: "#000", width: "0.70" },
  { name: "BEMASSUN...", icon: <DimBolt $w={S} fill="#f6ee24" />, color: "#000", width: "0.00" },
  { name: "BESCHRIFTU...", icon: <NotePencil $w={S} />, color: "#000", width: "0.35" },
  { name: "FREIHANDLI...", icon: <Layers $w={S} />, color: "#000", width: "0.25" },
  { name: "GEWINDELI...", icon: <Thread $w={S} color="#8a1a9a" />, color: "#a000a8", width: "0.00" },
  { name: "HILFSLINIEN", icon: <HPencil $w={S} />, color: "#00ff00", width: "0.18" },
  { name: "MASSGREN...", icon: <DimSmall $w={S} />, color: "#0000a8", width: "0.25" },
  { name: "MASSLINIEN", icon: <DimSmall $w={S} />, color: "#0000a8", width: "0.35" },
  { name: "MASSTEXTE", icon: <DimSmall $w={S} color="#38c038" />, color: "#a000a8", width: "0.35" },
  { name: "MITTELLINIEN", icon: <CenterTool $w={S} />, color: "#0000ff", width: "0.35", dotted: true },
  { name: "", icon: <HatchBox $w={S} />, color: "#000", width: "" },
];

const menu = ["Datei", "Bearbeiten", "Ansicht", "Einfügen", "Definieren", "Einstellungen", "Extras", "Fenster", "?"];

const rail1: { el: React.ReactNode; sep?: boolean }[] = [
  { el: <ArrowTool $w={23} />, sep: true },
  { el: <Sphere $w={24} /> },
  { el: <GlobeWrench $w={24} />, sep: true },
  { el: <Pencil $w={23} color="#e0802a" />, sep: true },
  { el: <Pliers $w={23} />, sep: true },
  { el: <Rotor $w={23} />, sep: true },
  { el: <Pencil $w={23} color="#1f8a3a" />, sep: true },
  { el: <CenterTool $w={23} />, sep: true },
  { el: <DimBolt $w={23} fill="#f6ee24" />, sep: true },
  { el: <AnnotTool $w={23} />, sep: true },
  { el: <TextTool $w={23} /> },
  { el: <HatchTool $w={23} /> },
  { el: <Info $w={24} /> },
  { el: <Eraser $w={22} />, sep: true },
];

const rail2: { h: number; el: React.ReactNode; sep?: boolean }[] = [
  { h: 28, el: <ArrowTool $w={22} ghost />, sep: true },
  { h: 28, el: <MoveRed $w={23} />, sep: true },
  { h: 28, el: <Triad $w={22} />, sep: true },
  { h: 25, el: <DoubleArrow $w={22} a="#8ab2d4" b="#8ab2d4" /> },
  { h: 24, el: <DoubleArrow $w={22} a="#2a5f92" b="#2a5f92" /> },
  { h: 27, el: <ArrowWave $w={22} b="#8ab2d4" /> },
  { h: 23, el: <ArrowWave $w={22} b="#2a5f92" /> },
  { h: 22, el: <DotsGrid rows={1} /> },
  { h: 50, el: <DotsGrid rows={6} gapAt={13} />, sep: true },
  { h: 27, el: <RotateDouble $w={22} /> },
  { h: 24, el: <RotateDouble $w={22} dark /> },
  { h: 25, el: <DotRing $w={22} />, sep: true },
  { h: 26, el: <UpArrows $w={20} /> },
  { h: 26, el: <UpArrows $w={20} dark />, sep: true },
  { h: 27, el: <Mirror $w={22} b="#6a9fd0" /> },
  { h: 25, el: <Mirror $w={22} b="#2a5f92" />, sep: true },
  { h: 28, el: <SnapCircle $w={23} /> },
];

/* ---------- 3D view ---------- */

const inPlane = (x: number, y: number) => {
  const upperLeft = 388 - ((x - 503) * (388 - 102)) / (1345 - 503);
  const upperRight = 102 + ((x - 1657) * 34) / (1904 - 1657);
  return y > upperLeft && y > upperRight;
};

const dots: [number, number][] = [];
for (let m = -60; m <= 60; m++) {
  for (let n = -40; n <= 40; n++) {
    const x = Math.round(1579 - 32.53 * m - 1.09 * n);
    const y = Math.round(449 + 11.07 * m + 30.88 * n);
    if (x > 505 && x < 1903 && y > 103 && y < 991 && inPlane(x, y)) dots.push([x, y]);
  }
}

const View3D = () => (
  <Canvas viewBox="504 102 1400 890" preserveAspectRatio="none">
    <defs>
      <linearGradient id="cyl" x1="0" y1="0" x2="0" y2="1">
        <stop offset="0" stopColor="#7c7c7c" />
        <stop offset=".3" stopColor="#888888" />
        <stop offset=".62" stopColor="#707070" />
        <stop offset=".88" stopColor="#565656" />
        <stop offset="1" stopColor="#404040" />
      </linearGradient>
      <linearGradient id="fillet" x1="0" y1="0" x2="0" y2="1">
        <stop offset="0" stopColor="#6c6c6c" />
        <stop offset=".3" stopColor="#8a8a8a" />
        <stop offset=".7" stopColor="#6a6a6a" />
        <stop offset="1" stopColor="#424242" />
      </linearGradient>
      <linearGradient id="bore" x1="0" y1="0" x2="0" y2="1">
        <stop offset="0" stopColor="#4e4e4e" />
        <stop offset=".25" stopColor="#787878" />
        <stop offset=".55" stopColor="#989898" />
        <stop offset=".8" stopColor="#7e7e7e" />
        <stop offset="1" stopColor="#969696" />
      </linearGradient>
      <linearGradient id="face" x1="0" y1="0" x2="0" y2="1">
        <stop offset="0" stopColor="#7a7a7a" />
        <stop offset="1" stopColor="#828282" />
      </linearGradient>
    </defs>

    <polygon points="503,388 1345,102 1657,102 1904,136 1904,992 503,992" fill="#e0ffff" />
    <line x1="503" y1="388" x2="1345" y2="102" stroke="#111" strokeWidth="1" />
    <line x1="1657" y1="102" x2="1904" y2="136" stroke="#111" strokeWidth="1" />
    {dots.map(([x, y], i) => (
      <rect key={i} x={x} y={y} width="1" height="1" fill="#000" />
    ))}
    <line x1="514" y1="444" x2="746" y2="475" stroke="#20208a" strokeWidth="1" strokeDasharray="14 4 2 4" />
    <line x1="1530" y1="583" x2="1795" y2="618" stroke="#20208a" strokeWidth="1" strokeDasharray="14 4 2 4" />

    <g stroke="#111" strokeWidth="1" strokeLinejoin="round">
      <polygon points="1151,370 1248,337 1258,382 1232,703 1135,736 1095,569" fill="#4c4c4c" />
      <polygon points="792,322 891,288 1248,337 1151,370" fill="#757575" />
      <polygon points="792,322 1151,370 1095,569 736,521" fill="url(#face)" />
      <polygon points="736,521 1095,569 1135,736 776,688" fill="#585858" />

      <path
        d="M1210 378 L1457 411 C1480 420 1500 450 1513 473 C1526 510 1530 560 1522 600 C1510 650 1485 690 1462 700 C1450 712 1435 725 1420 729 L1175 696 C1140 685 1120 610 1121 553 C1140 460 1185 380 1210 378 Z"
        fill="url(#cyl)"
      />
      <path
        d="M1440 412 L1457 411 C1480 420 1500 450 1513 473 C1526 510 1530 560 1522 600 C1510 650 1485 690 1462 700 C1450 712 1435 725 1420 729 L1400 727 C1375 715 1360 640 1363 587 C1375 490 1405 425 1440 412 Z"
        fill="url(#fillet)"
      />
      <ellipse cx="1474" cy="575" rx="53" ry="118" transform="rotate(6 1474 575)" fill="#494949" />
      <ellipse cx="1472" cy="575" rx="35" ry="78" transform="rotate(6 1472 575)" fill="#6a6a6a" />
      <ellipse cx="1469" cy="574" rx="30" ry="71" transform="rotate(6 1469 574)" fill="url(#bore)" />
      <ellipse cx="1477" cy="480" rx="4" ry="8.500" transform="rotate(6 1477 480)" fill="#8c8c8c" />
      <ellipse cx="1517" cy="560" rx="4" ry="8.500" transform="rotate(6 1517 560)" fill="#8c8c8c" />
      <ellipse cx="1428" cy="590" rx="4" ry="8.500" transform="rotate(6 1428 590)" fill="#8c8c8c" />
      <ellipse cx="1469" cy="672" rx="4" ry="8.500" transform="rotate(6 1469 672)" fill="#8c8c8c" />
    </g>
    <line x1="1440" y1="571" x2="1530" y2="583" stroke="#20208a" strokeWidth="1" strokeDasharray="14 4 2 4" />
  </Canvas>
);

/* ---------- page ---------- */

export default function App() {
  return (
    <Page>
      <GlobalStyle />
      <TitleBar>
        <Swoosh $left={0} />
        <TitleText>Schnittdarstellung_Teil_2.MOD  -  CADdy++ - [3D-Modell]</TitleText>
        <WindowButtons>
          <svg width="11" height="2"><rect width="11" height="1" fill="#999" /></svg>
          <svg width="11" height="11" viewBox="0 0 11 11" fill="none" stroke="#999"><path d="M.5 3.500 H7.500 V10.500 H.5 Z M3 3 V.5 H10.500 V8 H8" /></svg>
          <svg width="11" height="11" viewBox="0 0 11 11" stroke="#999"><path d="M0 0 L11 11 M11 0 L0 11" /></svg>
        </WindowButtons>
      </TitleBar>

      <MenuRow>
        <Swoosh $left={0} />
        {menu.map((label) => (
          <MenuItem key={label}>{label}</MenuItem>
        ))}
        <MdiButtons>
          <MdiButton><svg width="7" height="7"><rect y="5" width="7" height="2" fill="#999" /></svg></MdiButton>
          <MdiButton><svg width="9" height="9" viewBox="0 0 9 9" fill="none" stroke="#888"><path d="M.5 3 H6.500 V8.500 H.5 Z M3 3 V.5 H8.500 V6 H6.500" /></svg></MdiButton>
          <MdiButton><svg width="8" height="8" viewBox="0 0 8 8" stroke="#888" strokeWidth="1.800"><path d="M1 1 L7 7 M7 1 L1 7" /></svg></MdiButton>
        </MdiButtons>
      </MenuRow>

      <Toolbar $h={30} $pad={4}>
        <NewDoc $w={20} />
        <OpenFolder $w={22} $ml={3} />
        <Floppy $w={22} $ml={2} />
        <Select $w={139} $ml={5}>
          Standardselektion
          <Chevron dir="down" color="#666" />
        </Select>
        <RedSelect $w={22} $ml={1} />
        <Caret $ml={1} />
        <Sep $ml={3} />
        <TargetBW $w={23} $ml={3} />
        <Select $w={82} $ml={0}>
          Absolut 2D
          <Chevron dir="down" color="#666" />
        </Select>
        <CurvedArrow $w={22} $ml={5} />
        <CurvedArrow $w={22} $ml={2} flip />
        <Sep $ml={2} />
        <DotGrid $w={24} $ml={1} />
        <EyeBox $w={23} $ml={2} />
        <Caret $ml={0} />
        <Field $w={117} $ml={2}>VOLLLINIE_BREIT</Field>
        <LayerFolder $ml={2} />
        <Bulb $ml={2} layer />
        <Swatch $ml={2} />
        <Layers $ml={3} />
        <Select $w={77} $ml={1} $white $h={24}>
          <LinePreview />
          <Chevron dir="down" color="#666" />
        </Select>
        <Layers $ml={1} />
        <Field $w={60} $ml={2}>0.500000</Field>
        <Layers $ml={1} />
        <Field $w={108} $ml={6} />
        <FolderPeople $ml={1} />
        <Bulb $ml={1} />
      </Toolbar>

      <Main>
        <Dock>
          <DockHeader>
            <Grip />
            <DockHeaderGlyph $ml={6}>◂</DockHeaderGlyph>
            <DockHeaderGlyph $ml={6}>✕</DockHeaderGlyph>
          </DockHeader>
          <DockIcons>
            <ActiveToggle $w={21} />
            <FolderSwap $w={22} $ml={2} />
            <CircleDim $w={21} $ml={3} />
            <Pencil $w={21} $ml={3} />
            <NotePencil $w={21} $ml={2} />
            <HPencil $w={22} $ml={2} />
            <HatchBox $w={21} $ml={2} />
            <DimBolt $w={20} $ml={3} />
            <CenterMark $w={22} $ml={3} />
            <StepDash $w={21} $ml={3} />
            <WireCube $w={22} $ml={2} />
            <Thread $w={21} $ml={2} />
            <WireBox $w={21} $ml={3} />
            <ListIcon $w={22} $ml={2} />
          </DockIcons>
          <Panel>
            <Tabs>
              <Tab>
                <TabMagnifier $w={15} />
                Modell
              </Tab>
              <Tab $active>
                <Layers $w={14} />
                Folien
              </Tab>
            </Tabs>
            <TreeBox>
              <TreeRow>
                <Layers $w={15} />
                Standard
              </TreeRow>
              <StatusWindow>
                <StatusHead>
                  Status
                  <StatusClose />
                </StatusHead>
                <StatusBody>
                  <StatusLeft />
                  <StatusFields>
                    {[0, 0, 1, 0, 0, 1, 0, 0, 0, 1].map((gap, i) => (
                      <StatusField key={i} $gap={gap} />
                    ))}
                  </StatusFields>
                </StatusBody>
              </StatusWindow>
            </TreeBox>

            <ListBox>
              <ListMain>
                <ListHead>
                  <HeadCell>Name</HeadCell>
                  <HeadCell>F</HeadCell>
                  <HeadCell>T</HeadCell>
                  <HeadCell>B</HeadCell>
                  <HeadCell>A</HeadCell>
                  <HeadCell>S</HeadCell>
                  <SortMark><Chevron dir="down" color="#888" size={8} /></SortMark>
                </ListHead>
                {rows.map((r, i) => (
                  <Row key={i}>
                    <NameCell>
                      {r.icon}
                      {r.name}
                    </NameCell>
                    <ColorCell $color={r.color} />
                    <DashCell $dotted={r.dotted} />
                    <WidthCell>{r.width}</WidthCell>
                    <IconCell $pad={2}><Check $w={15} /></IconCell>
                    <IconCell $pad={1}><EyeSmall $w={15} /></IconCell>
                  </Row>
                ))}
              </ListMain>
              <VTrack>
                <ScrollEnd><Chevron dir="up" /></ScrollEnd>
                <ThumbV $h={173} />
                <ScrollEnd $bottom><Chevron dir="down" /></ScrollEnd>
              </VTrack>
            </ListBox>
            <WhiteStrip />
            <ListTools>
              <ExLayer $w={24} />
              <CanUndo $w={22} />
            </ListTools>
            <NoteBox>
              <NoteArea>
                <NoteGutter />
              </NoteArea>
              <HScroll $h={16}>
                <ScrollBtn><Chevron dir="left" /></ScrollBtn>
                <ThumbH $w={78} $ml={0} />
                <ScrollBtn><Chevron dir="right" /></ScrollBtn>
              </HScroll>
            </NoteBox>
          </Panel>
        </Dock>

        <Work>
          <Toolbar $h={30} $pad={4}>
            <Box3 />
            <Caret $ml={1} />
            <Select $w={110} $ml={1} $h={23}>
              Standard XY
              <Chevron dir="down" color="#666" />
            </Select>
            <PlaneBulb $w={26} $ml={3} />
            <PlaneTools $w={20} $ml={3} />
            <Caret $ml={0} />
            <Sep $ml={3} />
            <PlaneTool $w={24} $ml={2} />
            <PlaneTool $ml={3} red />
            <Sep $ml={0} />
            <Ball2D $w={23} $ml={2} label="2D" />
            <Ball2D $w={23} $ml={2} label="3D" />
            <Sep $ml={1} />
            <Orbit $ml={3} />
            <HouseZoom $ml={2} />
            <GlassBox $w={20} $ml={3} />
            <Hand $w={20} $ml={4} />
            <ZoomArrow $w={20} $ml={6} />
            <ZoomArrow $w={20} $ml={3} fwd />
            <PanZoom $ml={3} />
            <DocZoom $w={21} $ml={2} />
            <Roller $w={20} $ml={3} />
            <ShadedCube $ml={3} />
            <Caret $ml={1} />
            <Sep $ml={3} />
            <Hatch $ml={3} />
            <GreyBall $w={19} $ml={3} />
            <Caret $ml={3} $grey />
            <Star $w={9} $ml={5} />
            <Field $w={30} $ml={2} $h={23} $pad={5}>0</Field>
            <Spin>
              <SpinBtn />
              <SpinBtn $down />
            </Spin>
            <Field $w={89} $ml={7} $h={23} />
            <FolderPeople $ml={2} />
            <Bulb $ml={2} />
          </Toolbar>
          <WorkBody>
            <Rail>
              {rail1.map((t, i) => (
                <RailSlot key={i} $h={28} $sep={t.sep}>{t.el}</RailSlot>
              ))}
            </Rail>
            <Rail>
              {rail2.map((t, i) => (
                <RailSlot key={i} $h={t.h} $sep={t.sep}>{t.el}</RailSlot>
              ))}
            </Rail>
            <CanvasColumn>
              <CanvasRow>
                <View3D />
                <VTrack>
                  <ScrollEnd><Chevron dir="up" color="#333" /></ScrollEnd>
                  <ThumbV $h={19} $top={450} />
                  <ScrollEnd $bottom><Chevron dir="down" color="#333" /></ScrollEnd>
                </VTrack>
              </CanvasRow>
              <HScroll $h={16}>
                <ScrollBtn><Chevron dir="left" color="#333" /></ScrollBtn>
                <ThumbH $w={30} $ml={692} />
                <ScrollBtn><Chevron dir="right" color="#333" /></ScrollBtn>
                <ScrollBtn />
              </HScroll>
            </CanvasColumn>
          </WorkBody>
        </Work>
      </Main>

      <StatusBar>
        <StatusPane $w={197} />
        <StatusPane $w={1350} />
        <Brand>
          <BrandOval />
          <BrandData>Data</BrandData>
          <BrandSolid>Solid</BrandSolid>
        </Brand>
      </StatusBar>
    </Page>
  );
}
